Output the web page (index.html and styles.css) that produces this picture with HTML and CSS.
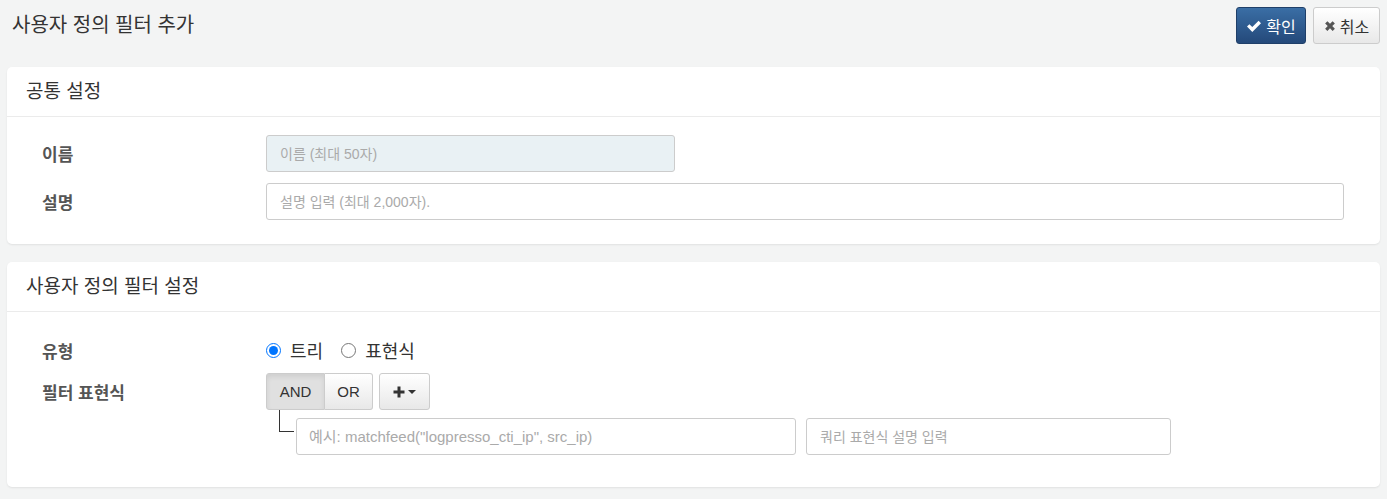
FILE: index.html
```html
<!DOCTYPE html>
<html lang="ko">
<head>
    <meta charset="UTF-8">
    <title>사용자 정의 필터 추가</title>
    <link rel="stylesheet" href="styles.css">
</head>
<body>
    <div class="page">
        <div class="page-header">
            <h1>사용자 정의 필터 추가</h1>
            <div class="actions">
                <button type="button" class="btn btn-primary">
                    <svg class="icon" viewBox="0 0 16 16" width="16" height="16"><path d="M1 8.6 L3.4 6.2 L6.3 9.1 L12.6 2.8 L15 5.2 L6.3 13.9 Z" fill="#fff"/></svg>
                    확인
                </button>
                <button type="button" class="btn btn-default">
                    <svg class="icon" viewBox="0 0 16 16" width="12" height="12"><path d="M1.5 4.5 L4.5 1.5 L8 5 L11.5 1.5 L14.5 4.5 L11 8 L14.5 11.5 L11.5 14.5 L8 11 L4.5 14.5 L1.5 11.5 L5 8 Z" fill="#555"/></svg>
                    취소
                </button>
            </div>
        </div>

        <div class="card">
            <div class="card-header">공통 설정</div>
            <div class="card-body">
                <div class="form-row">
                    <label class="form-label">이름</label>
                    <input type="text" class="form-control name-input" placeholder="이름 (최대 50자)">
                </div>
                <div class="form-row">
                    <label class="form-label">설명</label>
                    <input type="text" class="form-control" placeholder="설명 입력 (최대 2,000자).">
                </div>
            </div>
        </div>

        <div class="card">
            <div class="card-header">사용자 정의 필터 설정</div>
            <div class="card-body filter-body">
                <div class="form-row radio-row">
                    <label class="form-label">유형</label>
                    <div class="radios">
                        <label class="radio"><input type="radio" name="type" checked> 트리</label>
                        <label class="radio"><input type="radio" name="type"> 표현식</label>
                    </div>
                </div>
                <div class="form-row top">
                    <label class="form-label">필터 표현식</label>
                    <div class="tree">
                        <div class="toolbar">
                            <div class="btn-group">
                                <button type="button" class="btn btn-default active">AND</button>
                                <button type="button" class="btn btn-default">OR</button>
                            </div>
                            <button type="button" class="btn btn-default add-btn">
                                <svg viewBox="0 0 12 12" width="12" height="12"><path d="M4.5 0.5 H7.5 V4.5 H11.5 V7.5 H7.5 V11.5 H4.5 V7.5 H0.5 V4.5 H4.5 Z" fill="#333"/></svg>
                                <span class="caret"></span>
                            </button>
                        </div>
                        <div class="tree-node">
                            <div class="connector"></div>
                            <input type="text" class="form-control expr-input" placeholder="예시: matchfeed(&quot;logpresso_cti_ip&quot;, src_ip)">
                            <input type="text" class="form-control desc-input" placeholder="쿼리 표현식 설명 입력">
                        </div>
                    </div>
                </div>
            </div>
        </div>
    </div>
</body>
</html>
```

FILE: styles.css
```css
body {
    margin: 0;
    background-color: #f3f4f4;
    font-family: "Liberation Sans", "Noto Sans CJK KR", sans-serif;
    color: #333;
}

.page {
    padding: 7px 7px 10px 7px;
}

.page-header {
    display: flex;
    justify-content: space-between;
    align-items: flex-start;
    margin-bottom: 23px;
}

h1 {
    margin: 5px 0 2px 5px;
    font-size: 20px;
    font-weight: normal;
    line-height: 26px;
    color: #333;
}

.actions {
    display: flex;
    gap: 7px;
}

.btn {
    display: inline-flex;
    align-items: center;
    justify-content: center;
    gap: 4px;
    height: 37px;
    padding: 0 9px;
    font-family: inherit;
    font-size: 16px;
    border-radius: 3px;
    cursor: pointer;
}

.btn-primary {
    width: 70px;
    color: #fff;
    background-image: linear-gradient(to bottom, #3a6ea5 0%, #24497a 100%);
    border: 1px solid #1f3f69;
}

.btn-default {
    color: #333;
    background-image: linear-gradient(to bottom, #fff 0%, #e8e8e8 100%);
    border: 1px solid #ccc;
}

.actions .btn-default {
    width: 67px;
}

.card {
    background-color: #fff;
    border-radius: 5px;
    box-shadow: 0 1px 2px rgba(0, 0, 0, 0.08);
    margin-bottom: 18px;
}

.card-header {
    height: 49px;
    line-height: 50px;
    padding: 0 19px;
    font-size: 19px;
    color: #333;
    border-bottom: 1px solid #ebebeb;
}

.card-body {
    padding: 18px 36px 24px 35px;
    display: flex;
    flex-direction: column;
    gap: 11px;
}

.form-row {
    display: flex;
    align-items: center;
}

.form-row.top {
    align-items: flex-start;
}

.form-label {
    width: 224px;
    flex-shrink: 0;
    font-size: 17px;
    font-weight: bold;
    color: #555;
}

.form-row.top .form-label {
    line-height: 36px;
    padding-top: 3px;
}

.form-control {
    box-sizing: border-box;
    height: 37px;
    flex: 1;
    padding: 0 13px;
    font-family: inherit;
    font-size: 14px;
    color: #555;
    background-color: #fff;
    border: 1px solid #ccc;
    border-radius: 3px;
    outline: none;
}

.form-control::placeholder {
    color: #aaa;
}

.name-input {
    flex: 0 0 409px;
    background-color: #e9f1f4;
}

.filter-body {
    padding-top: 20px;
    padding-bottom: 32px;
    gap: 5px;
}

.radio-row {
    height: 36px;
}

.radios {
    display: flex;
    gap: 18px;
}

.radio {
    display: flex;
    align-items: center;
    gap: 9px;
    font-size: 18px;
    color: #333;
}

.radio input {
    width: 15px;
    height: 15px;
    margin: 0;
}

.toolbar {
    display: flex;
    gap: 6px;
}

.btn-group {
    display: flex;
}

.btn-group .btn {
    height: 37px;
    font-size: 15px;
    padding: 0 10px;
}

.btn-group .btn:first-child {
    width: 59px;
    border-radius: 3px 0 0 3px;
}

.btn-group .btn:last-child {
    width: 48px;
    border-left: none;
    border-radius: 0 3px 3px 0;
}

.btn-default.active {
    background-image: none;
    background-color: #e0e0e0;
    box-shadow: inset 0 3px 5px rgba(0, 0, 0, 0.08);
}

.add-btn {
    width: 51px;
    gap: 3px;
}

.caret {
    width: 0;
    height: 0;
    border-left: 4px solid transparent;
    border-right: 4px solid transparent;
    border-top: 4px solid #333;
}

.tree-node {
    display: flex;
    align-items: flex-start;
    margin-top: 8px;
}

.connector {
    box-sizing: border-box;
    width: 15px;
    height: 22px;
    margin: -8px 2px 0 13px;
    border-left: 1px solid #333;
    border-bottom: 1px solid #333;
}

.expr-input {
    flex: 0 0 500px;
    padding-left: 12px;
    font-size: 15px;
}

.desc-input {
    flex: 0 0 365px;
    margin-left: 10px;
}
```
